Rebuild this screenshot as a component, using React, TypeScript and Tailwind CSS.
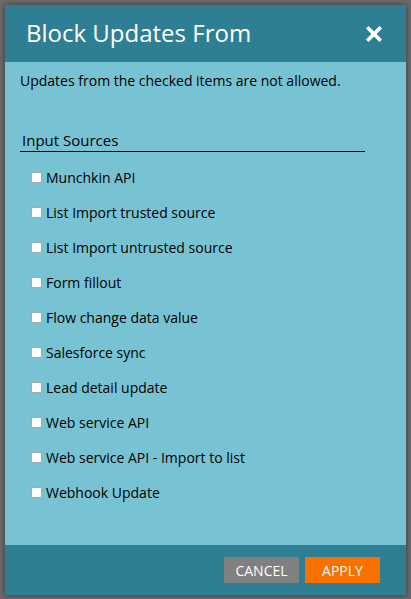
import React from "react";

const items = [
  "Munchkin API",
  "List Import trusted source",
  "List Import untrusted source",
  "Form fillout",
  "Flow change data value",
  "Salesforce sync",
  "Lead detail update",
  "Web service API",
  "Web service API - Import to list",
  "Webhook Update",
];

export default function App() {
  return (
    <div
      className="w-[411px] h-[599px] bg-[#6b6b6b] p-[5px] overflow-hidden"
      style={{ fontFamily: '"Open Sans", "Liberation Sans", sans-serif' }}
    >
      <div className="h-[590px] flex flex-col shadow-[0_0_6px_rgba(0,0,0,0.5)]">
        <div className="h-[57px] bg-[#2e7f94] flex items-center justify-between pl-[21px] pr-[24px]">
          <div className="text-white text-[24px] leading-none pb-[2px]">Block Updates From</div>
          <svg width="16" height="16" viewBox="0 0 16 16" className="mt-[1px]">
            <path d="M2.5 2.5 L13.5 13.5 M13.5 2.5 L2.5 13.5" stroke="white" strokeWidth="3.6" strokeLinecap="square" />
          </svg>
        </div>
        <div className="flex-1 bg-[#78c3d3] pl-[15px] pt-[9px] text-black">
          <div className="text-[14px] leading-[19px]">Updates from the checked items are not allowed.</div>
          <div className="mt-[40px] w-[345px] border-b border-black pl-[2px] pb-[1px] text-[15px] leading-[20px]">
            Input Sources
          </div>
          <div className="mt-[8px] flex flex-col">
            {items.map((t) => (
              <div key={t} className="h-[35px] flex items-center pl-[11px]">
                <span className="w-[11px] h-[11px] bg-white border border-[#a8a8a8] rounded-[2px] mr-[4px] shrink-0" />
                <span className="text-[14px] leading-[18px]">{t}</span>
              </div>
            ))}
          </div>
        </div>
        <div className="h-[50px] bg-[#2e7f94] flex items-center justify-end pr-[26px] gap-[6px]">
          <div className="w-[75px] h-[26px] bg-[#808080] text-white text-[14px] flex items-center justify-center">CANCEL</div>
          <div className="w-[75px] h-[26px] bg-[#f87000] text-white text-[14px] flex items-center justify-center">APPLY</div>
        </div>
      </div>
    </div>
  );
}
